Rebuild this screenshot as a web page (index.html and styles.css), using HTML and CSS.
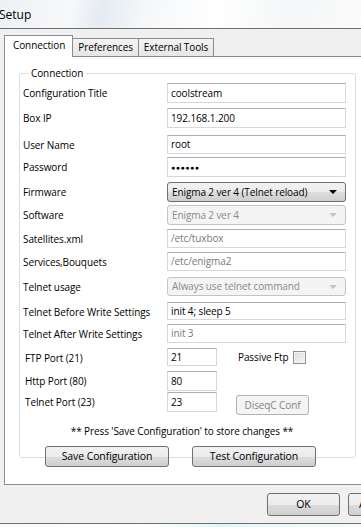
FILE: index.html
```html
<!DOCTYPE html>
<html lang="en">

<head>
    <meta charset="UTF-8">
    <meta name="viewport" content="width=device-width, initial-scale=1.0">
    <title>Setup</title>
    <link rel="stylesheet" href="styles.css">
</head>

<body>
    <div class="titlebar"><span class="title">Setup</span></div>
    <div class="client">
        <div class="tabs">
            <div class="tab active">Connection</div>
            <div class="tab">Preferences</div>
            <div class="tab">External Tools</div>
        </div>
        <div class="tabpage">
            <fieldset class="group">
                <legend>Connection</legend>
                <div class="row r25">
                    <label>Configuration Title</label>
                    <div class="box">coolstream</div>
                </div>
                <div class="row r27">
                    <label>Box IP</label>
                    <div class="box">192.168.1.200</div>
                </div>
                <div class="row r22">
                    <label>User Name</label>
                    <div class="box h19">root</div>
                </div>
                <div class="row r25">
                    <label>Password</label>
                    <div class="box"><span class="dots">●●●●●●</span></div>
                </div>
                <div class="row r23">
                    <label>Firmware</label>
                    <div class="combo">Enigma 2 ver 4 (Telnet reload)<span class="arrow"></span></div>
                </div>
                <div class="row r24">
                    <label>Software</label>
                    <div class="combo disabled">Enigma 2 ver 4<span class="arrow"></span></div>
                </div>
                <div class="row r23">
                    <label>Satellites.xml</label>
                    <div class="box h19 disabled">/etc/tuxbox</div>
                </div>
                <div class="row r25">
                    <label>Services,Bouquets</label>
                    <div class="box h19 disabled">/etc/enigma2</div>
                </div>
                <div class="row r25">
                    <label>Telnet usage</label>
                    <div class="combo disabled h19">Always use telnet command<span class="arrow"></span></div>
                </div>
                <div class="row r22">
                    <label>Telnet Before Write Settings</label>
                    <div class="box h18">init 4; sleep 5</div>
                </div>
                <div class="row r24">
                    <label>Telnet After Write Settings</label>
                    <div class="box h19 disabled">init 3</div>
                </div>
                <div class="row r23">
                    <label class="port">FTP Port (21)</label>
                    <div class="box small h18">21</div>
                    <span class="passive">Passive Ftp</span>
                    <span class="check"></span>
                </div>
                <div class="row r21">
                    <label class="port">Http Port (80)</label>
                    <div class="box small">80</div>
                </div>
                <div class="row r22">
                    <label class="port">Telnet Port (23)</label>
                    <div class="box small">23</div>
                    <div class="btn disabled diseqc">DiseqC Conf</div>
                </div>
                <p class="note">** Press 'Save Configuration' to store changes **</p>
                <div class="actions">
                    <div class="btn save">Save Configuration</div>
                    <div class="btn test">Test Configuration</div>
                </div>
            </fieldset>
        </div>
        <div class="footer">
            <div class="btn ok">OK</div>
            <div class="btn cancel">Annuleren</div>
        </div>
    </div>
    <div class="glass"></div>
</body>

</html>
```

FILE: styles.css
```css
body {
    margin: 0;
    width: 361px;
    height: 527px;
    overflow: hidden;
    font-family: "Open Sans", "Liberation Sans", sans-serif;
    font-size: 10px;
    color: #000;
}

.titlebar {
    height: 28px;
    border-bottom: 1px solid #6f6f6f;
    background: linear-gradient(100deg, #eef1f4 0%, #f7f8fa 20%, #e4ebf1 28%, #f5f7f9 40%, #ffffff 60%, #f4f6f7 80%, #fbfbfb 100%);
}
.titlebar .title {
    display: block;
    padding-top: 6px;
    margin-left: -1px;
    font-size: 12px;
}

.client {
    height: 494px;
    background-color: #f0f0f0;
    border-bottom: 1px solid #6f6f6f;
    display: flex;
    flex-direction: column;
}

.tabs {
    display: flex;
    align-items: flex-end;
    padding: 7px 0 0 4px;
    height: 20px;
    position: relative;
    z-index: 1;
}
.tab {
    height: 17px;
    line-height: 16px;
    padding: 0 5px;
    border: 1px solid #898c95;
    border-bottom: none;
    background: linear-gradient(#f3f3f3, #e6e6e6);
    margin-left: -1px;
    letter-spacing: -0.1px;
}
.tab.active {
    height: 21px;
    line-height: 19px;
    padding: 0 7px 0 8px;
    background: #fff;
    margin-left: 0;
    margin-bottom: -1px;
}

.tabpage {
    margin-left: 4px;
    width: 380px;
    height: 427px;
    border: 1px solid #898c95;
    background-color: #fff;
}

.group {
    margin: 9px 0 0 14px;
    height: 392px;
    padding: 3px 0 0 3px;
    border: 1px solid #d5dfe5;
    border-radius: 3px;
    box-sizing: border-box;
    width: 337px;
    letter-spacing: -0.1px;
}
.group legend {
    margin-left: 5px;
    padding: 0 3px 0 3px;
    line-height: 14px;
}

.row {
    display: flex;
    align-items: flex-start;
}
.row label {
    width: 144px;
    flex-shrink: 0;
    height: 20px;
    line-height: 20px;
}
.row label.port {
    padding-left: 2px;
    width: 142px;
}
.r21 { height: 21px; }
.r22 { height: 22px; }
.r23 { height: 23px; }
.r24 { height: 24px; }
.r25 { height: 25px; }
.r27 { height: 27px; }

.box {
    width: 179px;
    height: 20px;
    box-sizing: border-box;
    border: 1px solid #d5d9de;
    border-top-color: #abadb3;
    padding-left: 3px;
    line-height: 18px;
}
.box.h19 { height: 19px; line-height: 17px; }
.box.h18 { height: 18px; line-height: 16px; }
.box.disabled {
    color: #7a7a7a;
}
.box.small {
    width: 50px;
}
.dots {
    font-size: 7px;
    letter-spacing: 0.5px;
    vertical-align: 1px;
}

.combo {
    width: 179px;
    height: 20px;
    box-sizing: border-box;
    border: 1px solid #707070;
    border-radius: 3px;
    background: linear-gradient(#f2f2f2 0%, #ebebeb 50%, #dddddd 51%, #cfcfcf 100%);
    padding-left: 4px;
    line-height: 18px;
    position: relative;
}
.combo .arrow {
    position: absolute;
    right: 8px;
    top: 7px;
    border-left: 4px solid transparent;
    border-right: 4px solid transparent;
    border-top: 4px solid #000;
}
.combo.disabled {
    border-color: #c2c5c8;
    background: #f4f4f4;
    color: #8a8a8a;
}
.combo.disabled .arrow {
    border-top-color: #c5c5c5;
}
.combo.h19 { height: 19px; line-height: 17px; }

.passive {
    margin-left: 21px;
    line-height: 18px;
}
.check {
    width: 11px;
    height: 11px;
    margin: 3px 0 0 4px;
    border: 1px solid #8f8f8f;
    background: linear-gradient(135deg, #dcdcdc, #f7f7f7);
    box-shadow: inset 0 0 0 1px #f4f4f4;
}

.btn {
    box-sizing: border-box;
    border: 1px solid #707070;
    border-radius: 3px;
    background: linear-gradient(#f2f2f2 0%, #ebebeb 50%, #dddddd 51%, #cfcfcf 100%);
    text-align: center;
    font-size: 10.5px;
}
.btn.disabled {
    border-color: #adb2b5;
    background: #f4f4f4;
    color: #838383;
}
.diseqc {
    width: 73px;
    height: 20px;
    line-height: 18px;
    margin: 3px 0 0 19px;
    font-size: 10px;
}

.note {
    margin: 10px 0 0 0;
    padding-right: 14px;
    text-align: center;
    line-height: 14px;
}
.actions {
    display: flex;
    gap: 23px;
    margin: 8px 0 0 22px;
}
.actions .btn {
    width: 124px;
    height: 21px;
    line-height: 19px;
}

.footer {
    display: flex;
    gap: 8px;
    padding: 8px 0 0 267px;
}
.footer .btn {
    width: 73px;
    height: 23px;
    line-height: 21px;
    flex-shrink: 0;
}

.glass {
    height: 3px;
    background: linear-gradient(90deg, #f6f9fa, #ffffff 40%, #dff6f7 60%, #f7fafb);
}
```
